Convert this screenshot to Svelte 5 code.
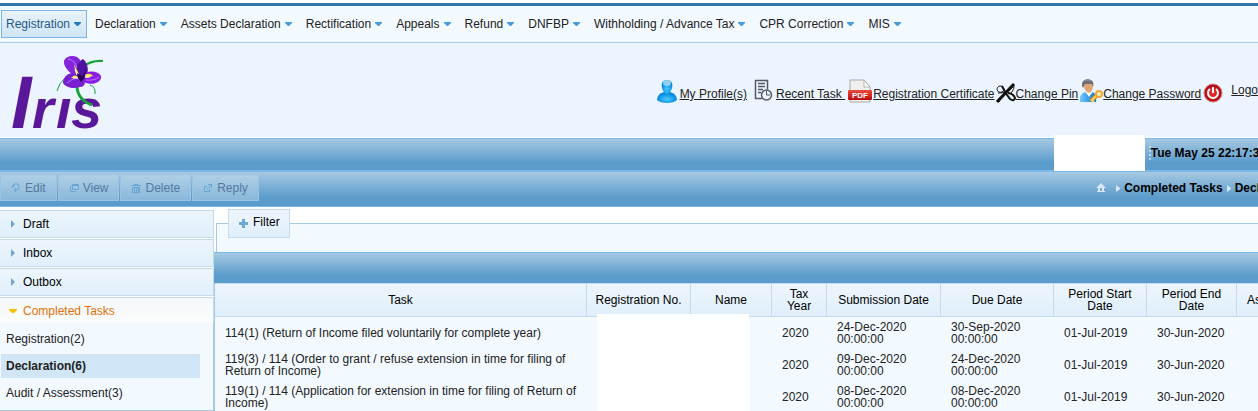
<script lang="ts">
    const menu = [
        'Registration',
        'Declaration',
        'Assets Declaration',
        'Rectification',
        'Appeals',
        'Refund',
        'DNFBP',
        'Withholding / Advance Tax',
        'CPR Correction',
        'MIS'
    ];

    const folders = ['Draft', 'Inbox', 'Outbox'];

    const completed = [
        { name: 'Registration', count: 2 },
        { name: 'Declaration', count: 6 },
        { name: 'Audit / Assessment', count: 3 }
    ];

    const tasks = [
        {
            task: '114(1) (Return of Income filed voluntarily for complete year)',
            year: 2020,
            submitted: '24-Dec-2020 00:00:00',
            due: '30-Sep-2020 00:00:00',
            start: '01-Jul-2019',
            end: '30-Jun-2020'
        },
        {
            task: '119(3) / 114 (Order to grant / refuse extension in time for filing of Return of Income)',
            year: 2020,
            submitted: '09-Dec-2020 00:00:00',
            due: '24-Dec-2020 00:00:00',
            start: '01-Jul-2019',
            end: '30-Jun-2020'
        },
        {
            task: '119(1) / 114 (Application for extension in time for filing of Return of Income)',
            year: 2020,
            submitted: '08-Dec-2020 00:00:00',
            due: '08-Dec-2020 00:00:00',
            start: '01-Jul-2019',
            end: '30-Jun-2020'
        }
    ];

    let activeMenu = $state('Registration');
    let activeTask = $state('Declaration');
</script>

<div class="page">
    <nav class="menubar">
        {#each menu as item}
            <button class="menu-item" class:active={item == activeMenu} onclick={() => (activeMenu = item)}>
                {item}
                <svg class="caret" width="7" height="4" viewBox="0 0 7 4"><path d="M0 0h7v1L4 4H3L0 1z" /></svg>
            </button>
        {/each}
    </nav>

    <header class="header">
        <svg class="logo" width="96" height="84" viewBox="0 0 96 84">
            <text class="wordmark" y="73"><tspan x="5" font-size="74">I</tspan><tspan x="26" font-size="56">r</tspan><tspan x="50" font-size="56">ı</tspan><tspan x="65" font-size="56">s</tspan></text>
            <g fill="none" stroke="#17a338">
                <path d="M77 12Q85 5 97 6" stroke-width="2" />
                <path d="M51 36Q53 28 59 23" stroke-width="1" />
                <path d="M84 30Q90 32 89 39" stroke-width="1" />
                <path d="M71 32Q72 45 86 50" stroke-width="3" />
            </g>
            <path d="M72 24C65 19 57 12 58 6C60 0 71 -1 74 5C77 10 74 18 74 24z" fill="#8425dc" />
            <path d="M73 25C66 17 72 6 77 4C83 9 83 18 79 24z" fill="#4f12a3" />
            <path d="M73 20C64 15 57 21 57 28C60 33 68 34 74 32C80 32 80 26 77 21z" fill="#7a1fd0" />
            <path d="M75 21C80 15 92 15 95 21C96 28 85 31 78 27z" fill="#8a1ee6" />
            <path d="M62 4Q69 5 71 13M61 28Q68 22 73 24M80 25Q88 26 93 22" fill="none" stroke="#b877ff" stroke-width="1" />
            <path d="M68 9L73 19L70 19zM65 23Q69 18 73 23zM79 20Q84 17 87 21L80 23z" fill="#ffec55" />
            <path d="M69 14L71 20M67 23h5M79 22h5" stroke="#fff" />
            <path d="M71 18L76 21L80 15L78 24L75 27L72 23z" fill="#270657" />
        </svg>

        <div class="user-links">
            <a href="/profile" class="link-profile">
                <svg width="22" height="24" viewBox="0 0 22 24">
                    <defs>
                        <radialGradient id="person" cx="50%" cy="65%">
                            <stop offset="0" stop-color="#4cc9ff" />
                            <stop offset="1" stop-color="#078be0" />
                        </radialGradient>
                    </defs>
                    <path d="M8 13Q1 15 1 21Q4 24 11 24Q18 24 21 21Q21 15 14 13z" fill="url(#person)" />
                    <path d="M11 1C6 1 5 5 6 9Q8 15 11 15Q14 15 16 9C17 5 16 1 11 1z" fill="url(#person)" />
                    <ellipse cx="11" cy="4" rx="4" ry="3" fill="#b1dcf0" opacity=".8" />
                </svg>
                <span>My Profile(s)</span>
            </a>
            <a href="/recent" class="link-recent">
                <svg width="24" height="24" viewBox="0 0 24 24" fill="none" stroke="#555963">
                    <path d="M11 19.500H4.500V1.500h12v9" stroke-width="1.500" />
                    <path d="M7 4.500h7M7 7.500h7M7 10.500h5M7 13.500h3" stroke-width="1.500" />
                    <circle cx="15.500" cy="16" r="5" fill="#ecf4ff" stroke-width="1.500" />
                    <path d="M15.500 12v4H19" />
                </svg>
                <span>Recent Task&nbsp;</span>
            </a>
            <a href="/certificate" class="link-pdf">
                <svg width="24" height="24" viewBox="0 0 24 24">
                    <defs>
                        <linearGradient id="pdf-band" x2="0" y2="1">
                            <stop offset="0" stop-color="#f04a3f" />
                            <stop offset="1" stop-color="#b90c0c" />
                        </linearGradient>
                    </defs>
                    <path d="M2 1H16L22 8V23H2z" fill="#efefef" stroke="#a8a8a8" />
                    <path d="M16 1V8H22z" fill="#fff" stroke="#b5b5b5" />
                    <rect y="11" width="24" height="10" rx="1" fill="url(#pdf-band)" />
                    <text class="pdf-text" x="12" y="19" text-anchor="middle">PDF</text>
                </svg>
                <span>Registration Certificate</span>
            </a>
            <a href="/pin" class="link-pin">
                <svg width="20" height="20" viewBox="0 0 20 20" fill="none" stroke="#111">
                    <path d="M1 19L18 1" stroke-width="3" />
                    <path d="M4 3C-1 4 1 11 6 9C10 7 7 3 4 3" stroke-width="1" />
                    <path d="M6 3L9 9L14 16Q18 19 19 15Q18 11 12 10" stroke-width="2" />
                    <path d="M2 10Q12 10 17 4M17 1Q20 5 14 11M5 14L3 19" />
                </svg>
                <span>Change Pin</span>
            </a>
            <a href="/password" class="link-password">
                <svg width="24" height="24" viewBox="0 0 24 24">
                    <defs>
                        <linearGradient id="shirt">
                            <stop offset="0" stop-color="#73c9ff" />
                            <stop offset="1" stop-color="#0878d3" />
                        </linearGradient>
                    </defs>
                    <path d="M1 23Q0 15 6 13L10 17L14 13Q18 16 17 23z" fill="url(#shirt)" />
                    <path d="M7 13L10 18L13 13z" fill="#fff" />
                    <path d="M5 5Q5 13 10 14Q14 13 14 5Q10 2 5 5z" fill="#e1a678" />
                    <path d="M3 7Q2 1 9 0Q16 1 14 8L13 5H6L4 9z" fill="#6b6f73" />
                    <path d="M6 2Q9 0 12 2" fill="none" stroke="#92979b" />
                    <path d="M12 22L19 15" stroke="#d78b12" stroke-width="4" />
                    <path d="M12 22L19 15M13 21l2 2" stroke="#ffd162" stroke-width="2" />
                    <circle cx="20" cy="15" r="3" fill="#fff1bf" stroke="#edaa34" stroke-width="2" />
                </svg>
                <span>Change Password</span>
            </a>
            <a href="/logout" class="link-logout">
                <svg width="20" height="20" viewBox="0 0 20 20">
                    <defs>
                        <radialGradient id="power">
                            <stop offset="0" stop-color="#ff3131" />
                            <stop offset="1" stop-color="#a90710" />
                        </radialGradient>
                    </defs>
                    <circle cx="10" cy="10" r="9" fill="url(#power)" stroke="#d97b80" />
                    <path d="M7 6A5 5 0 1 0 13 6M10 4V10" fill="none" stroke="#fff" stroke-width="2" />
                </svg>
                <span>Logout</span>
            </a>
        </div>
    </header>

    <div class="bar status">
        <div class="user-box"></div>
        <b class="date">Tue May 25 22:17:39</b>
    </div>

    <div class="bar toolbar">
        <div class="actions">
            <button disabled>
                <svg width="10" height="10" viewBox="0 0 10 10"><path d="M1 5V4L3 1H7L8 3V5L6 7H3M1 3h3M5 5L3 7L5 9" /></svg>
                Edit
            </button>
            <button disabled>
                <svg width="10" height="10" viewBox="0 0 10 10"><path d="M3.500 1.500h6v5h-6zM3.500 2.500h6M1.500 3v5.500H7" /></svg>
                View
            </button>
            <button disabled>
                <svg width="10" height="10" viewBox="0 0 10 10"><path d="M0 2.500h10M3 1.500h4M1.500 4.500h7v5h-7zM3.500 5v4M5.500 5v4M7.500 5v4" /></svg>
                Delete
            </button>
            <button disabled>
                <svg width="10" height="10" viewBox="0 0 10 10"><path d="M4 3.500H1.500v5h5V6M4 6L8.500 1.500M5 1.500h3.500V5" /></svg>
                Reply
            </button>
        </div>
        <div class="breadcrumb">
            <a href="/" aria-label="Home">
                <svg width="10" height="9" viewBox="0 0 10 9"><path d="M5 0L10 5H8V8H9V9H1V8H2V5H0zM4 5V8H6V5z" fill-rule="evenodd" /></svg>
            </a>
            <svg width="4" height="7" viewBox="0 0 4 7"><path d="M0 0L4 3v1L0 7z" /></svg>
            <a href="/completed">Completed Tasks</a>
            <svg width="4" height="7" viewBox="0 0 4 7"><path d="M0 0L4 3v1L0 7z" /></svg>
            <a href="/declaration">Declaration</a>
        </div>
    </div>

    <div class="content">
        <aside class="sidebar">
            {#each folders as folder}
                <button class="folder">
                    <svg width="8" height="8" viewBox="0 0 8 8"><path d="M2 0L6 4L2 8z" /></svg>
                    {folder}
                </button>
            {/each}
            <button class="folder open">
                <svg width="8" height="8" viewBox="0 0 8 8"><path d="M0 2h8v1L5 6H3L0 3z" /></svg>
                Completed Tasks
            </button>
            <ul class="sub-list">
                {#each completed as item}
                    <li>
                        <a href="/completed/{item.name}" class:selected={item.name == activeTask}>{item.name}({item.count})</a>
                    </li>
                {/each}
            </ul>
        </aside>

        <main>
            <fieldset>
                <legend>
                    <button class="filter">
                        <svg width="9" height="9" viewBox="0 0 9 9"><path d="M3 0h3v3h3v3H6v3H3V6H0V3h3z" /></svg>
                        <span>Filter</span>
                    </button>
                </legend>
            </fieldset>
            <div class="bar table-bar"></div>
            <div class="table-wrap">
                <table>
                    <colgroup>
                        <col />
                        <col class="w-reg" />
                        <col class="w-name" />
                        <col class="w-year" />
                        <col class="w-submitted" />
                        <col class="w-due" />
                        <col class="w-start" />
                        <col class="w-end" />
                        <col class="w-last" />
                    </colgroup>
                    <thead>
                        <tr>
                            <th>Task</th>
                            <th>Registration No.</th>
                            <th>Name</th>
                            <th>Tax Year</th>
                            <th>Submission Date</th>
                            <th>Due Date</th>
                            <th>Period Start Date</th>
                            <th>Period End Date</th>
                            <th class="cut">As</th>
                        </tr>
                    </thead>
                    <tbody>
                        {#each tasks as row}
                            <tr>
                                <td>{row.task}</td>
                                <td></td>
                                <td></td>
                                <td>{row.year}</td>
                                <td>{row.submitted}</td>
                                <td>{row.due}</td>
                                <td class="nowrap">{row.start}</td>
                                <td class="nowrap">{row.end}</td>
                                <td></td>
                            </tr>
                        {/each}
                    </tbody>
                </table>
                <div class="mask"></div>
            </div>
        </main>
    </div>
</div>

<style>
    :global(body) {
        margin: 0;
        background: #fff;
    }
    .page {
        font: 12px/14px "Liberation Sans", Arial, sans-serif;
        color: #222;
        overflow: hidden;
        padding-top: 3px;
    }
    button {
        font: inherit;
        margin: 0;
        cursor: pointer;
    }
    svg {
        flex: none;
    }
    /*top menu*/
    .menubar {
        display: flex;
        gap: 3px;
        padding: 4px 1px;
        border-top: 3px solid #3576a9;
        border-bottom: 1px solid #a6c9e2;
        background: #f2f9ff;
    }
    .menu-item {
        display: flex;
        align-items: center;
        gap: 4px;
        height: 28px;
        padding: 0 5px 0 4px;
        border: 1px solid transparent;
        background: none;
        color: #222;
        white-space: nowrap;
    }
    .menu-item.active {
        border-color: #79b7e7;
        background: linear-gradient(#e8f2fa, #d0e5f5);
        color: #1d5987;
    }
    .caret {
        fill: #469bdd;
    }
    .active .caret {
        fill: #217bc0;
    }
    /*logo and user links*/
    .header {
        display: flex;
        align-items: flex-start;
        justify-content: space-between;
        height: 82px;
        padding: 12px 0 0 6px;
        background: #ecf5ff;
        border-bottom: 1px solid #fff;
    }
    .logo {
        overflow: visible;
    }
    .wordmark {
        font-family: "Liberation Sans", Arial, sans-serif;
        font-style: italic;
        font-weight: bold;
        fill: #5a1799;
    }
    .user-links {
        display: flex;
        align-items: flex-end;
        margin: 24px -10px 0 0;
        white-space: nowrap;
    }
    .user-links a {
        display: flex;
        align-items: flex-end;
        color: #222;
    }
    .user-links span {
        margin-bottom: 2px;
    }
    .link-profile {
        gap: 2px;
    }
    .link-recent {
        gap: 1px;
        margin-left: 4px;
    }
    .link-pdf {
        gap: 1px;
        margin-left: 3px;
    }
    .link-pin,
    .link-password {
        margin-left: 1px;
    }
    .link-logout {
        margin-left: 2px;
    }
    .user-links .link-logout {
        gap: 8px;
        align-items: flex-start;
    }
    .pdf-text {
        font-size: 8px;
        font-weight: bold;
        fill: #fff;
    }
    /*blue bars*/
    .bar {
        border-top: 1px solid #79b7e7;
        background: linear-gradient(#a6c9e2, #5c9ccc 75%);
    }
    .status {
        position: relative;
        display: flex;
        justify-content: flex-end;
        align-items: center;
        height: 31px;
        color: #000;
    }
    .date {
        margin: 0 -8px 3px 0;
        border-left: 2px dotted #b5d5eb;
        white-space: nowrap;
    }
    .user-box {
        position: absolute;
        top: -4px;
        right: 113px;
        width: 91px;
        height: 36px;
        background: #fff;
    }
    .toolbar {
        display: flex;
        justify-content: space-between;
        align-items: flex-start;
        height: 34px;
        border-top-width: 2px;
        border-bottom: 1px solid #79b7e7;
    }
    .actions {
        display: flex;
        gap: 1px;
        padding-top: 2px;
    }
    .actions button {
        display: flex;
        align-items: center;
        gap: 4px;
        height: 27px;
        padding: 0 10px;
        border: 1px solid #9bc4e3;
        background: linear-gradient(#afd0e6, #8ab7da);
        color: #517a9d;
    }
    .actions svg {
        fill: none;
        stroke: #69a5d2;
    }
    .breadcrumb {
        display: flex;
        align-items: center;
        gap: 4px;
        height: 32px;
        margin-right: -42px;
        font-weight: bold;
        white-space: nowrap;
    }
    .breadcrumb a {
        color: #000;
        text-decoration: none;
    }
    .breadcrumb svg {
        fill: #d8e7f3;
    }
    .breadcrumb a:first-child {
        margin-right: 6px;
    }
    /*left accordion*/
    .content {
        display: flex;
        align-items: flex-start;
    }
    .sidebar {
        flex: none;
        width: 214px;
        padding-top: 3px;
    }
    .folder {
        display: flex;
        align-items: center;
        gap: 6px;
        box-sizing: border-box;
        width: 100%;
        height: 28px;
        margin-bottom: 1px;
        padding: 0 8px;
        border: 1px solid #c5dbec;
        border-left: 0;
        background: linear-gradient(#edf5fc, #dfeffc);
        color: #000;
    }
    .folder svg {
        margin-left: 1px;
        fill: #6da8d5;
    }
    .folder.open {
        height: 26px;
        margin-bottom: 0;
        border-bottom: 0;
        background: linear-gradient(#f5f8f9, #fbfcfc);
        color: #e17009;
    }
    .open svg {
        fill: #f9bd01;
    }
    .sub-list {
        margin: 0;
        padding: 4px 13px 2px 1px;
        border-right: 1px solid #a6c9e2;
        border-bottom: 1px solid #a6c9e2;
        background: #f2f9ff;
        list-style: none;
    }
    .sub-list a {
        display: block;
        margin-bottom: 3px;
        padding: 5px;
        color: #222;
        text-decoration: none;
    }
    .sub-list a.selected {
        background: #d0e5f5;
        font-weight: bold;
    }
    /*filter and task table*/
    main {
        flex: 1;
        min-width: 0;
        padding-top: 2px;
    }
    fieldset {
        margin: 0 0 0 2px;
        padding: 0 0 14px 11px;
        border: 1px solid #a6c9e2;
        border-right: 0;
        border-bottom: 0;
        background: #f2f9ff;
    }
    legend {
        padding: 0;
    }
    .filter {
        display: flex;
        align-items: center;
        gap: 5px;
        height: 29px;
        padding: 0 9px 0 10px;
        border: 1px solid #c5dbec;
        background: linear-gradient(#edf5fc, #dfeffc);
        color: #000;
    }
    .filter span {
        padding-bottom: 3px;
    }
    .filter svg {
        fill: #6da8d5;
    }
    .table-bar {
        height: 30px;
    }
    .table-wrap {
        position: relative;
        border-left: 1px solid #a6c9e2;
        background: #f2f9ff;
    }
    table {
        width: 100%;
        table-layout: fixed;
        border-collapse: separate;
        border-spacing: 0;
        line-height: 12px;
    }
    th {
        height: 24px;
        padding: 4px 8px;
        border: 1px solid #c5dbec;
        border-left: 0;
        background: linear-gradient(#edf5fc, #dfeffc);
        color: #000;
        font-weight: normal;
    }
    th.cut {
        text-align: left;
        white-space: nowrap;
        overflow: hidden;
        padding: 4px 0 4px 10px;
        border-right: 0;
    }
    td {
        height: 24px;
        padding: 4px 10px;
    }
    .nowrap {
        white-space: nowrap;
    }
    .w-reg {
        width: 104px;
    }
    .w-name {
        width: 81px;
    }
    .w-year {
        width: 55px;
    }
    .w-submitted {
        width: 114px;
    }
    .w-due {
        width: 113px;
    }
    .w-start {
        width: 93px;
    }
    .w-end {
        width: 90px;
    }
    .w-last {
        width: 21px;
    }
    .mask {
        position: absolute;
        top: 31px;
        right: 509px;
        bottom: 0;
        width: 152px;
        background: #fff;
    }
</style>
